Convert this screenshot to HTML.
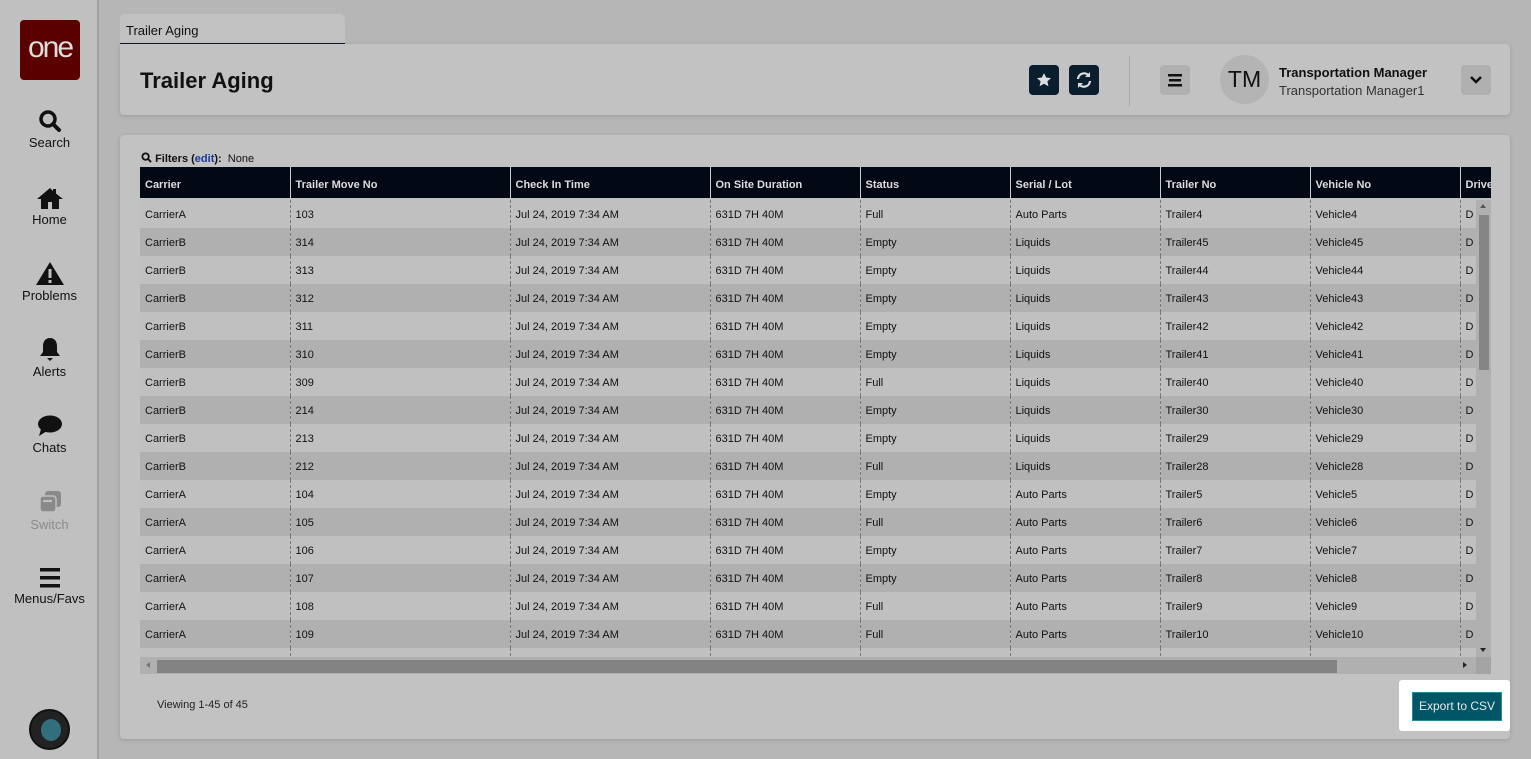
<!DOCTYPE html>
<html><head><style>
*{box-sizing:border-box;margin:0;padding:0}
body{width:1531px;height:759px;background:#b6b6b6;font-family:"Liberation Sans",Arial,sans-serif;position:relative;overflow:hidden;color:#111}
.side{position:absolute;left:0;top:0;width:99px;height:759px;background:#c0c0c0;border-right:2px solid #a0a0a0}
.logo{position:absolute;left:20px;top:20px;width:60px;height:60px;background:#5a0000;border-radius:4px;color:#ddd;font-size:30px;text-align:center;line-height:56px;letter-spacing:-2px}
.ni{position:absolute;left:0;width:99px;text-align:center;font-size:13px;color:#111}
.ni svg{display:block;margin:0 auto 2px}
.tab{position:absolute;left:120px;top:14px;width:225px;height:31px;background:#c2c2c2;border-radius:5px 5px 0 0;border-bottom:2px solid #0a1a2e;font-size:13px;padding:9px 6px}
.card{position:absolute;background:#c2c2c2;border-radius:4px;box-shadow:0 1px 4px rgba(0,0,0,.15)}
h1{position:absolute;left:20px;top:24px;font-size:22px;font-weight:bold}
.ib{position:absolute;width:30px;height:30px;border-radius:4px;background:#0a1e30}
table{border-collapse:collapse;font-size:11px;table-layout:fixed}
th{background:#020814;color:#ddd;text-align:left;font-weight:bold;height:31px;padding-left:5px;padding-top:5px;border-left:1px solid #ccc}
th:first-child{border-left:none}
td{height:28px;padding-left:5px;padding-top:2px;border-left:1px dashed #777;white-space:nowrap;overflow:hidden}
td:first-child{border-left:none}
tr.o td{background:#c0c0c0}tr.e td{background:#b0b0b0}
</style></head><body>
<div class="side">
<div class="logo">one</div>
<div class="ni" style="top:109px"><svg width="24" height="24" viewBox="0 0 24 24"><circle cx="10" cy="10" r="7" fill="none" stroke="#111" stroke-width="3.5"/><path d="M15 15l6 6" stroke="#111" stroke-width="4" stroke-linecap="round"/></svg>Search</div>
<div class="ni" style="top:186px"><svg width="28" height="24" viewBox="0 0 28 24"><path d="M14 2L1 13h4v10h7v-7h4v7h7V13h4L20 7.5V3h-3v2z" fill="#111"/></svg>Home</div>
<div class="ni" style="top:261px"><svg width="30" height="25" viewBox="0 0 30 25"><path d="M15 1L1 24h28z" fill="#111"/><rect x="13.5" y="8" width="3" height="9" fill="#c0c0c0"/><rect x="13.5" y="19" width="3" height="3" fill="#c0c0c0"/></svg>Problems</div>
<div class="ni" style="top:337px"><svg width="24" height="25" viewBox="0 0 24 25"><path d="M12 1c-5 0-7 4-7 8v6l-3 4h20l-3-4V9c0-4-2-8-7-8z" fill="#111"/><path d="M9 21h6l-3 3z" fill="#111"/></svg>Alerts</div>
<div class="ni" style="top:414px"><svg width="26" height="24" viewBox="0 0 26 24"><ellipse cx="13" cy="10" rx="12" ry="8.5" fill="#111"/><path d="M4 15l-2 7 8-5z" fill="#111"/></svg>Chats</div>
<div class="ni" style="top:489px;color:#8a8a8a"><svg width="26" height="26" viewBox="0 0 26 26"><rect x="8" y="2" width="16" height="16" rx="3" fill="#8a8a8a"/><rect x="3" y="7" width="16" height="16" rx="3" fill="#8a8a8a" stroke="#c0c0c0" stroke-width="1.5"/><rect x="6" y="11" width="9" height="2" fill="#c0c0c0"/></svg>Switch</div>
<div class="ni" style="top:567px"><svg width="24" height="22" viewBox="0 0 24 22"><rect x="2" y="1" width="20" height="3.5" fill="#111"/><rect x="2" y="9" width="20" height="3.5" fill="#111"/><rect x="2" y="17" width="20" height="3.5" fill="#111"/></svg>Menus/Favs</div>
<div style="position:absolute;left:29px;top:709px;width:41px;height:41px;border-radius:50%;background:#222;border:2px solid #111"><div style="position:absolute;left:10px;top:8px;width:20px;height:22px;border-radius:50%;background:#3a8ea3;opacity:.7"></div></div>
</div>
<div class="tab">Trailer Aging</div>
<div class="card" style="left:120px;top:44px;width:1390px;height:71px;border-radius:0 4px 4px 4px">
<h1>Trailer Aging</h1>
<div class="ib" style="left:909px;top:21px"><svg width="30" height="30" viewBox="0 0 30 30"><path d="M15 8l2.1 4.5 4.9.6-3.6 3.3 1 4.9L15 18.8 10.6 21.3l1-4.9L8 13.1l4.9-.6z" fill="#ddd"/></svg></div>
<div class="ib" style="left:949px;top:21px"><svg width="30" height="30" viewBox="0 0 30 30"><path d="M9 14a6 6 0 0 1 11-3M21 16a6 6 0 0 1-11 3" fill="none" stroke="#ddd" stroke-width="2.2"/><path d="M21 7v5h-5zM9 23v-5h5z" fill="#ddd"/></svg></div>
<div style="position:absolute;left:1009px;top:12px;width:1px;height:50px;background:#aaa"></div>
<div style="position:absolute;left:1040px;top:21px;width:30px;height:30px;border-radius:4px;background:#b0b0b0"><svg width="30" height="30" viewBox="0 0 30 30"><rect x="8" y="9" width="14" height="2.5" fill="#111"/><rect x="9" y="14" width="12" height="2.5" fill="#111"/><rect x="8" y="19" width="14" height="2.5" fill="#111"/></svg></div>
<div style="position:absolute;left:1100px;top:11px;width:49px;height:49px;border-radius:50%;background:#b4b4b4;font-size:23px;text-align:center;line-height:49px;color:#111">TM</div>
<div style="position:absolute;left:1159px;top:21px;font-size:13px;font-weight:bold">Transportation Manager</div>
<div style="position:absolute;left:1159px;top:39px;font-size:13px;color:#333">Transportation Manager1</div>
<div style="position:absolute;left:1341px;top:21px;width:30px;height:30px;border-radius:4px;background:#b0b0b0"><svg width="30" height="30" viewBox="0 0 30 30"><path d="M10 12l5 5 5-5" fill="none" stroke="#111" stroke-width="2.5"/></svg></div>
</div>
<div class="card" style="left:120px;top:135px;width:1390px;height:604px">
<div style="position:absolute;left:21px;top:17px;font-size:11px"><svg width="11" height="11" viewBox="0 0 12 12" style="vertical-align:-1px"><circle cx="5" cy="5" r="3.5" fill="none" stroke="#111" stroke-width="2"/><path d="M7.5 7.5l3.5 3.5" stroke="#111" stroke-width="2"/></svg> <b>Filters (<span style="color:#1a3a9a">edit</span>):</b> &nbsp;None</div>
<div style="position:absolute;left:20px;top:32px;width:1351px;height:507px;overflow:hidden;background:#c0c0c0">
<table style="width:1400px">
<colgroup><col style="width:150px"><col style="width:220px"><col style="width:200px"><col style="width:150px"><col style="width:150px"><col style="width:150px"><col style="width:150px"><col style="width:150px"><col style="width:80px"></colgroup>
<tr><th>Carrier</th><th>Trailer Move No</th><th>Check In Time</th><th>On Site Duration</th><th>Status</th><th>Serial / Lot</th><th>Trailer No</th><th>Vehicle No</th><th>Driver</th></tr>
<tr style="height:2px"><td colspan="9" style="height:2px;background:#c0c0c0;padding:0"></td></tr>
<tr class="o"><td>CarrierA</td><td>103</td><td>Jul 24, 2019 7:34 AM</td><td>631D 7H 40M</td><td>Full</td><td>Auto Parts</td><td>Trailer4</td><td>Vehicle4</td><td>D</td></tr>
<tr class="e"><td>CarrierB</td><td>314</td><td>Jul 24, 2019 7:34 AM</td><td>631D 7H 40M</td><td>Empty</td><td>Liquids</td><td>Trailer45</td><td>Vehicle45</td><td>D</td></tr>
<tr class="o"><td>CarrierB</td><td>313</td><td>Jul 24, 2019 7:34 AM</td><td>631D 7H 40M</td><td>Empty</td><td>Liquids</td><td>Trailer44</td><td>Vehicle44</td><td>D</td></tr>
<tr class="e"><td>CarrierB</td><td>312</td><td>Jul 24, 2019 7:34 AM</td><td>631D 7H 40M</td><td>Empty</td><td>Liquids</td><td>Trailer43</td><td>Vehicle43</td><td>D</td></tr>
<tr class="o"><td>CarrierB</td><td>311</td><td>Jul 24, 2019 7:34 AM</td><td>631D 7H 40M</td><td>Empty</td><td>Liquids</td><td>Trailer42</td><td>Vehicle42</td><td>D</td></tr>
<tr class="e"><td>CarrierB</td><td>310</td><td>Jul 24, 2019 7:34 AM</td><td>631D 7H 40M</td><td>Empty</td><td>Liquids</td><td>Trailer41</td><td>Vehicle41</td><td>D</td></tr>
<tr class="o"><td>CarrierB</td><td>309</td><td>Jul 24, 2019 7:34 AM</td><td>631D 7H 40M</td><td>Full</td><td>Liquids</td><td>Trailer40</td><td>Vehicle40</td><td>D</td></tr>
<tr class="e"><td>CarrierB</td><td>214</td><td>Jul 24, 2019 7:34 AM</td><td>631D 7H 40M</td><td>Empty</td><td>Liquids</td><td>Trailer30</td><td>Vehicle30</td><td>D</td></tr>
<tr class="o"><td>CarrierB</td><td>213</td><td>Jul 24, 2019 7:34 AM</td><td>631D 7H 40M</td><td>Empty</td><td>Liquids</td><td>Trailer29</td><td>Vehicle29</td><td>D</td></tr>
<tr class="e"><td>CarrierB</td><td>212</td><td>Jul 24, 2019 7:34 AM</td><td>631D 7H 40M</td><td>Full</td><td>Liquids</td><td>Trailer28</td><td>Vehicle28</td><td>D</td></tr>
<tr class="o"><td>CarrierA</td><td>104</td><td>Jul 24, 2019 7:34 AM</td><td>631D 7H 40M</td><td>Empty</td><td>Auto Parts</td><td>Trailer5</td><td>Vehicle5</td><td>D</td></tr>
<tr class="e"><td>CarrierA</td><td>105</td><td>Jul 24, 2019 7:34 AM</td><td>631D 7H 40M</td><td>Full</td><td>Auto Parts</td><td>Trailer6</td><td>Vehicle6</td><td>D</td></tr>
<tr class="o"><td>CarrierA</td><td>106</td><td>Jul 24, 2019 7:34 AM</td><td>631D 7H 40M</td><td>Empty</td><td>Auto Parts</td><td>Trailer7</td><td>Vehicle7</td><td>D</td></tr>
<tr class="e"><td>CarrierA</td><td>107</td><td>Jul 24, 2019 7:34 AM</td><td>631D 7H 40M</td><td>Empty</td><td>Auto Parts</td><td>Trailer8</td><td>Vehicle8</td><td>D</td></tr>
<tr class="o"><td>CarrierA</td><td>108</td><td>Jul 24, 2019 7:34 AM</td><td>631D 7H 40M</td><td>Full</td><td>Auto Parts</td><td>Trailer9</td><td>Vehicle9</td><td>D</td></tr>
<tr class="e"><td>CarrierA</td><td>109</td><td>Jul 24, 2019 7:34 AM</td><td>631D 7H 40M</td><td>Full</td><td>Auto Parts</td><td>Trailer10</td><td>Vehicle10</td><td>D</td></tr>
<tr class="o"><td></td><td></td><td></td><td></td><td></td><td></td><td></td><td></td><td></td></tr>
</table>
<div style="position:absolute;left:1336px;top:33px;width:15px;height:457px;background:#b0b0b0"><div style="position:absolute;left:3px;top:15px;width:10px;height:155px;background:#858585"></div><div style="position:absolute;left:4px;top:4px;border:3px solid transparent;border-bottom:4px solid #555;border-top:none"></div><div style="position:absolute;left:4px;bottom:5px;border:3px solid transparent;border-top:4px solid #222;border-bottom:none"></div></div>
<div style="position:absolute;left:0;top:490px;width:1351px;height:17px;background:#b0b0b0"><div style="position:absolute;left:17px;top:3px;width:1180px;height:13px;background:#838383"></div><div style="position:absolute;left:6px;top:5px;border:3px solid transparent;border-right:4px solid #777;border-left:none"></div><div style="position:absolute;left:1323px;top:5px;border:3px solid transparent;border-left:4px solid #222;border-right:none"></div><div style="position:absolute;right:0;top:0;width:15px;height:17px;background:#a4a4a4"></div></div>
</div>
<div style="position:absolute;left:37px;top:564px;font-size:11px;color:#222">Viewing 1-45 of 45</div>
<div style="position:absolute;left:1279px;top:545px;width:111px;height:51px;background:#fff;border-radius:3px"></div>
<div style="position:absolute;left:1292px;top:557px;width:90px;height:29px;background:#005566;border:1px solid #2a8899;color:#e8e8e8;font-size:12px;text-align:center;line-height:27px">Export to CSV</div>
</div>
</body></html>
